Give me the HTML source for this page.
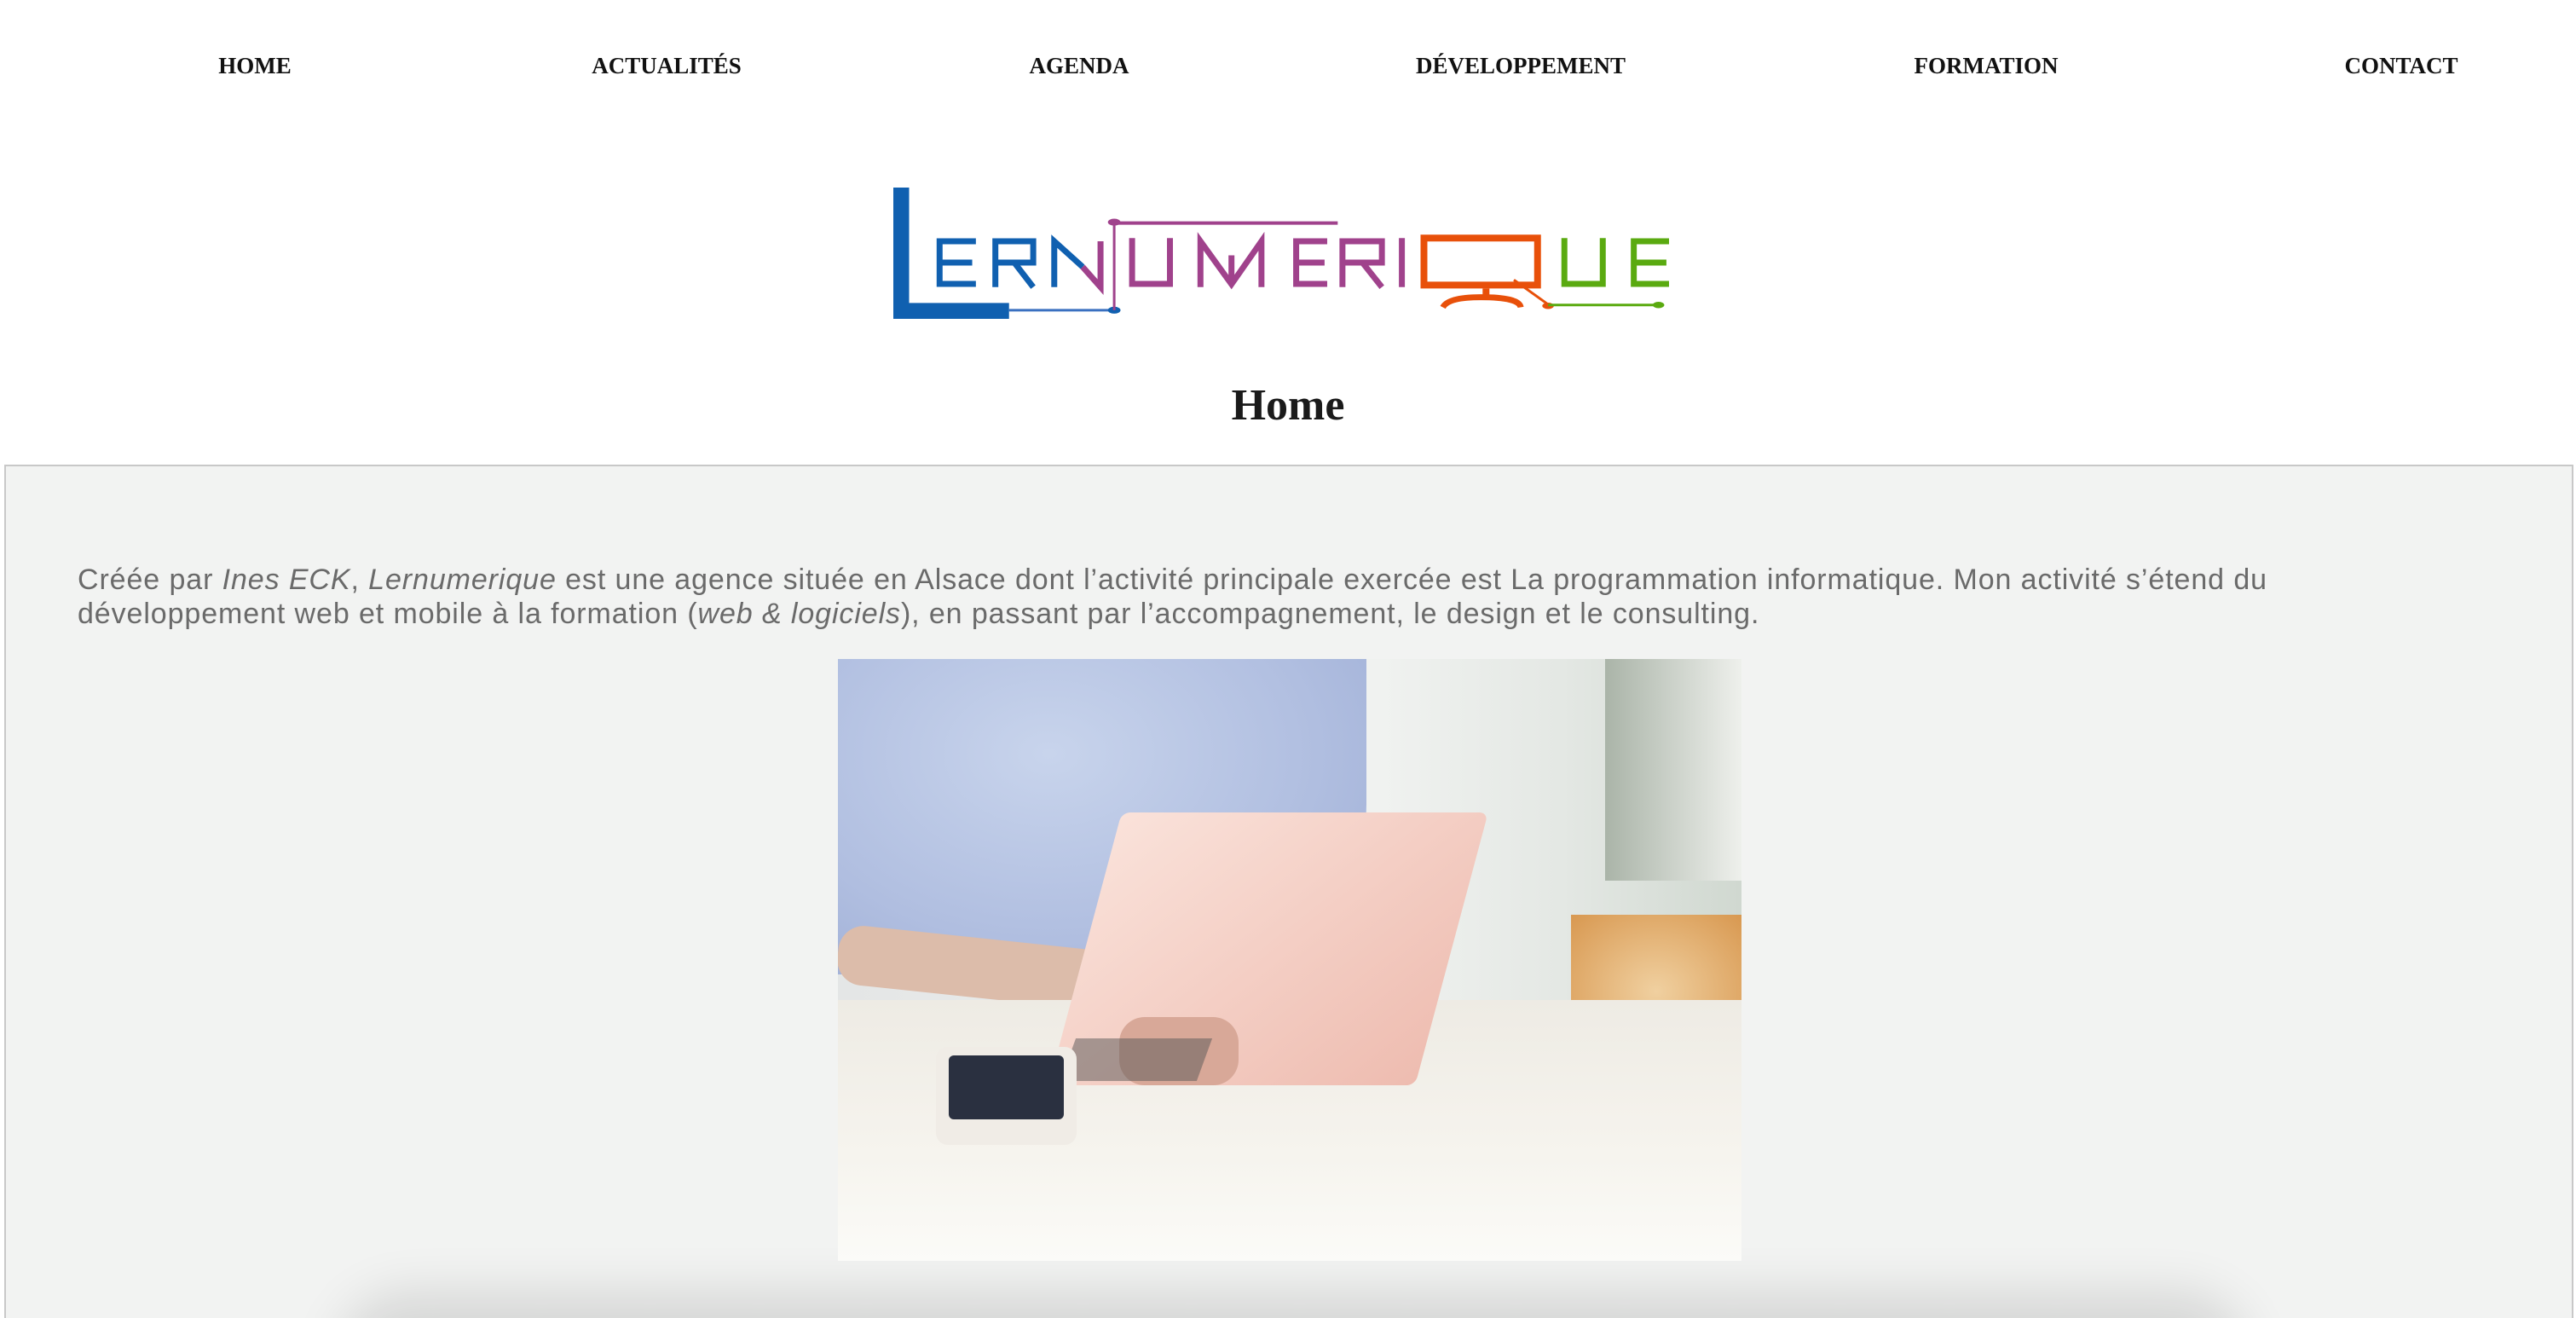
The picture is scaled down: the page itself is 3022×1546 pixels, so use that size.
<!DOCTYPE html>
<html><head><meta charset="utf-8"><style>
html,body{margin:0;padding:0;background:#fff;width:3022px;height:1546px;overflow:hidden;position:relative;font-family:"Liberation Sans",sans-serif}
.nav{position:absolute;top:62px;font-family:"Liberation Serif",serif;font-weight:bold;font-size:27px;color:#111;transform:translateX(-50%);white-space:nowrap}
h1{position:absolute;top:446px;left:0;width:3022px;text-align:center;margin:0;font-family:"Liberation Serif",serif;font-weight:bold;font-size:52px;color:#1a1a1a}
.box{position:absolute;left:5px;top:545px;width:3014px;height:1001px;background:#f2f3f2;border:2px solid #c8c8c8;border-bottom:none;box-sizing:border-box;overflow:hidden}
.txt{position:absolute;left:84px;top:113px;width:2780px;font-size:34px;letter-spacing:0.9px;line-height:40px;color:#6a6a6a}
.shadow{position:absolute;left:430px;top:1010px;width:2160px;height:100px;box-shadow:0 0 60px 40px rgba(0,0,0,0.12);background:#ddd;border-radius:40px}
.img{position:absolute;left:976px;top:226px;width:1060px;height:706px;overflow:hidden;background:#f6f6f2}
.img div{position:absolute}
</style></head><body>
<div class="nav" style="left:299px">HOME</div>
<div class="nav" style="left:782px">ACTUALITÉS</div>
<div class="nav" style="left:1266px">AGENDA</div>
<div class="nav" style="left:1784px">DÉVELOPPEMENT</div>
<div class="nav" style="left:2330px">FORMATION</div>
<div class="nav" style="left:2817px">CONTACT</div>

<svg style="position:absolute;left:1048px;top:220px" width="910" height="154" viewBox="35 65 1475 455" preserveAspectRatio="none">
<g fill="none" stroke-width="7" vector-effect="non-scaling-stroke">
<rect x="35" y="65" width="30" height="455" fill="#1060b0" stroke="none"/>
<rect x="35" y="465" width="220" height="55" fill="#1060b0" stroke="none"/>
<path d="M255 490H455" stroke="#3a70c0" stroke-width="3" vector-effect="non-scaling-stroke"/>
<circle cx="455" cy="490" r="12" fill="#1060b0" stroke="none"/>
<path d="M455 185V490" stroke="#a0428c" stroke-width="3" vector-effect="non-scaling-stroke"/>
<path d="M455 188H880" stroke="#a0428c" stroke-width="4" vector-effect="non-scaling-stroke"/>
<circle cx="455" cy="185" r="12" fill="#a0428c" stroke="none"/>
<g stroke="#1060b0" stroke-width="7">
<path vector-effect="non-scaling-stroke" d="M192 251H123V399H192M123 325H185"/>
<path vector-effect="non-scaling-stroke" d="M229 410V251H301V325H229M265 325L301 410"/>
<path vector-effect="non-scaling-stroke" d="M341 410V251L395 340"/>
</g>
<g stroke="#a0428c" stroke-width="7">
<path vector-effect="non-scaling-stroke" d="M395 340L429 410V251"/>
<path vector-effect="non-scaling-stroke" d="M489 240V399H561V240"/>
<path vector-effect="non-scaling-stroke" d="M619 410V251L678 400L735 251V410M678 400V300"/>
<path vector-effect="non-scaling-stroke" d="M860 251H801V399H860M801 325H855"/>
<path vector-effect="non-scaling-stroke" d="M889 410V251H964V325H889M927 325L964 410"/>
<path vector-effect="non-scaling-stroke" d="M1002 240V410"/>
</g>
<g stroke="#e8500a">
<rect x="1044" y="240" width="216" height="163" stroke-width="8" vector-effect="non-scaling-stroke"/>
<path d="M1162 415V450" stroke-width="8" vector-effect="non-scaling-stroke"/>
<path d="M1080 480Q1090 445 1152 445Q1225 445 1228 480" stroke-width="7" vector-effect="non-scaling-stroke"/>
<path d="M1215 385L1280 470" stroke-width="3" vector-effect="non-scaling-stroke"/>
</g>
<circle cx="1280" cy="475" r="11" fill="#e8500a" stroke="none"/>
<g stroke="#5aaa10" stroke-width="7">
<path d="M1280 472H1490" stroke-width="3" vector-effect="non-scaling-stroke"/>
<path vector-effect="non-scaling-stroke" d="M1311 240V399H1384V240"/>
<path vector-effect="non-scaling-stroke" d="M1510 251H1443V399H1510M1443 325H1505"/>
</g>
<circle cx="1490" cy="472" r="11" fill="#5aaa10" stroke="none"/>
</g></svg>

<h1>Home</h1>

<div class="box">
<div class="txt">Créée par <i>Ines ECK</i>, <i>Lernumerique</i> est une agence située en Alsace dont l’activité principale exercée est La programmation informatique. Mon activité s’étend du développement web et mobile à la formation (<i>web &amp; logiciels</i>), en passant par l’accompagnement, le design et le consulting.</div>
<div class="shadow"></div>
<div class="img">
<div style="left:0;top:0;width:1060px;height:706px;background:linear-gradient(90deg,#e4e6e6 0%,#f0f2f0 60%,#e4e8e4 80%,#d0d8d0 100%)"></div>
<div style="left:900px;top:0;width:160px;height:260px;background:linear-gradient(90deg,#aab4a8,#eef0ec)"></div>
<div style="left:860px;top:300px;width:200px;height:180px;background:radial-gradient(#f0d0a0,#d89850)"></div>
<div style="left:0;top:0;width:620px;height:370px;background:radial-gradient(ellipse at 40% 30%,#c8d4ec,#b0bee0 60%,#9cacd4);border-radius:0 0 200px 0"></div>
<div style="left:0;top:310px;width:480px;height:70px;background:#dcbcaa;border-radius:30px;transform:rotate(6deg);transform-origin:left"></div>
<div style="left:0;top:400px;width:1060px;height:306px;background:linear-gradient(180deg,#eeebe4,#f6f4ee 60%,#fbfbf8)"></div>
<div style="left:290px;top:180px;width:430px;height:320px;background:linear-gradient(135deg,#fae2da,#eebcb0);transform:skewX(-15deg);border-radius:10px"></div>
<div style="left:330px;top:420px;width:140px;height:80px;background:#d8a898;border-radius:30px"></div>
<div style="left:270px;top:445px;width:160px;height:50px;background:#555;transform:skewX(-20deg);opacity:.5"></div>
<div style="left:115px;top:455px;width:165px;height:115px;background:#f0ece6;border-radius:14px"></div>
<div style="left:130px;top:465px;width:135px;height:75px;background:#2a3040;border-radius:6px"></div>
</div>
</div>
</body></html>
